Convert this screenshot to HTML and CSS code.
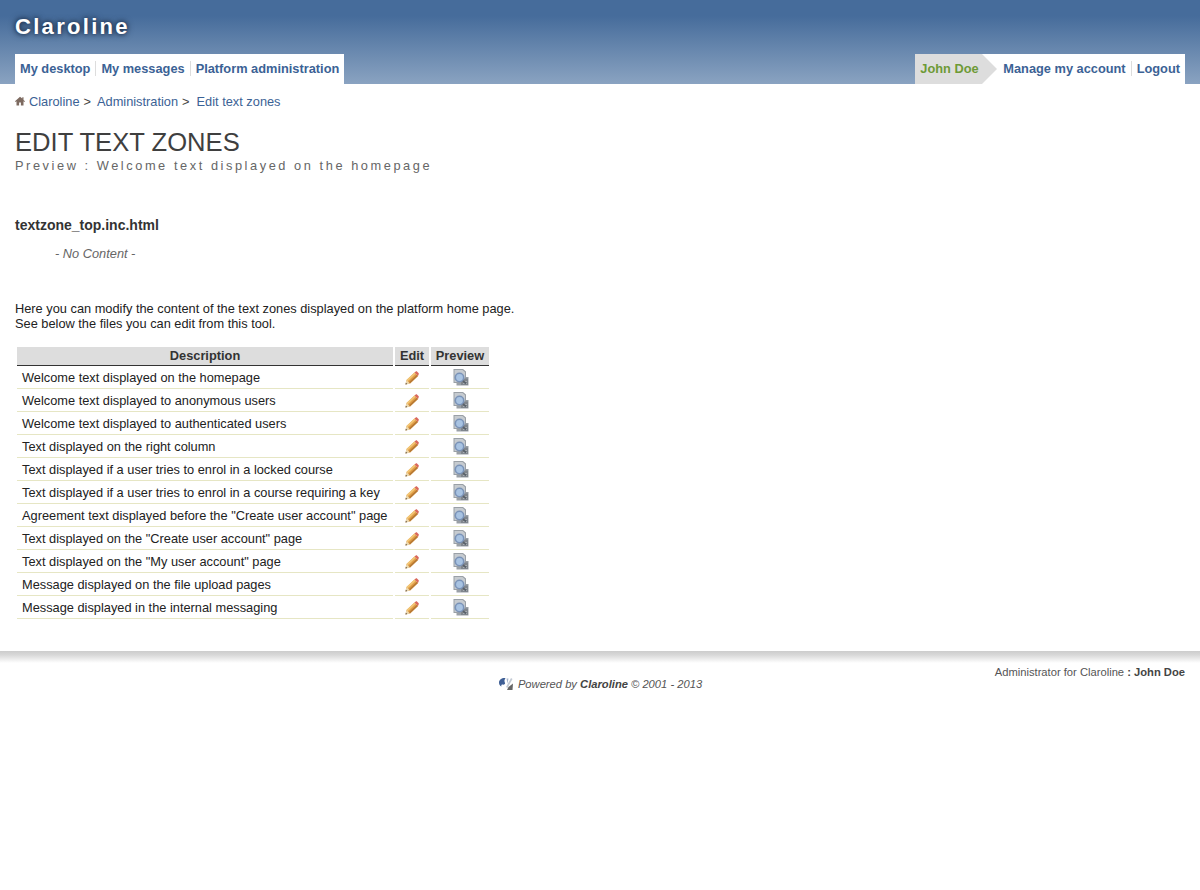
FILE: index.html
```html
<!DOCTYPE html>
<html lang="en">
<head>
<meta charset="utf-8">
<title>Claroline</title>
<link rel="stylesheet" href="styles.css">
</head>
<body>
<header class="top">
  <div class="brand">Claroline</div>
  <nav class="tabs">
    <ul class="tabset">
      <li><a href="#">My desktop</a></li>
      <li><a href="#">My messages</a></li>
      <li><a href="#">Platform administration</a></li>
    </ul>
    <div class="tabset user">
      <span class="username">John Doe</span>
      <ul class="tabset">
        <li><a href="#">Manage my account</a></li>
        <li><a href="#">Logout</a></li>
      </ul>
    </div>
  </nav>
</header>
<main class="content">
  <div class="crumbs">
    <svg class="home" width="10" height="10" viewBox="0 0 10 10"><path d="M5 .8 0 5.300l.6.7L1.500 5.300V9.500h2.600V6.500h1.800v3h2.600V5.300l.9.700.6-.7-1.500-1.400V1.200H7.300v1.300z" fill="#7d6a60"/></svg>
    <a href="#">Claroline</a><span class="sep">&gt;</span><a href="#">Administration</a><span class="sep wide">&gt;</span><a href="#">Edit text zones</a>
  </div>
  <h1>Edit text zones</h1>
  <p class="subtitle">Preview : Welcome text displayed on the homepage</p>
  <h2>textzone_top.inc.html</h2>
  <p class="empty">- No Content -</p>
  <p class="intro">Here you can modify the content of the text zones displayed on the platform home page.<br>See below the files you can edit from this tool.</p>
  <table class="zones">
    <thead><tr><th>Description</th><th>Edit</th><th>Preview</th></tr></thead>
    <tbody>
      <tr><td>Welcome text displayed on the homepage</td><td class="ic"><svg class="pen" viewBox="0 0 14 14"><use href="#pencil"/></svg></td><td class="ic"><svg class="prev" viewBox="0 0 17 17"><use href="#preview"/></svg></td></tr>
      <tr><td>Welcome text displayed to anonymous users</td><td class="ic"><svg class="pen" viewBox="0 0 14 14"><use href="#pencil"/></svg></td><td class="ic"><svg class="prev" viewBox="0 0 17 17"><use href="#preview"/></svg></td></tr>
      <tr><td>Welcome text displayed to authenticated users</td><td class="ic"><svg class="pen" viewBox="0 0 14 14"><use href="#pencil"/></svg></td><td class="ic"><svg class="prev" viewBox="0 0 17 17"><use href="#preview"/></svg></td></tr>
      <tr><td>Text displayed on the right column</td><td class="ic"><svg class="pen" viewBox="0 0 14 14"><use href="#pencil"/></svg></td><td class="ic"><svg class="prev" viewBox="0 0 17 17"><use href="#preview"/></svg></td></tr>
      <tr><td>Text displayed if a user tries to enrol in a locked course</td><td class="ic"><svg class="pen" viewBox="0 0 14 14"><use href="#pencil"/></svg></td><td class="ic"><svg class="prev" viewBox="0 0 17 17"><use href="#preview"/></svg></td></tr>
      <tr><td>Text displayed if a user tries to enrol in a course requiring a key</td><td class="ic"><svg class="pen" viewBox="0 0 14 14"><use href="#pencil"/></svg></td><td class="ic"><svg class="prev" viewBox="0 0 17 17"><use href="#preview"/></svg></td></tr>
      <tr><td>Agreement text displayed before the "Create user account" page</td><td class="ic"><svg class="pen" viewBox="0 0 14 14"><use href="#pencil"/></svg></td><td class="ic"><svg class="prev" viewBox="0 0 17 17"><use href="#preview"/></svg></td></tr>
      <tr><td>Text displayed on the "Create user account" page</td><td class="ic"><svg class="pen" viewBox="0 0 14 14"><use href="#pencil"/></svg></td><td class="ic"><svg class="prev" viewBox="0 0 17 17"><use href="#preview"/></svg></td></tr>
      <tr><td>Text displayed on the "My user account" page</td><td class="ic"><svg class="pen" viewBox="0 0 14 14"><use href="#pencil"/></svg></td><td class="ic"><svg class="prev" viewBox="0 0 17 17"><use href="#preview"/></svg></td></tr>
      <tr><td>Message displayed on the file upload pages</td><td class="ic"><svg class="pen" viewBox="0 0 14 14"><use href="#pencil"/></svg></td><td class="ic"><svg class="prev" viewBox="0 0 17 17"><use href="#preview"/></svg></td></tr>
      <tr><td>Message displayed in the internal messaging</td><td class="ic"><svg class="pen" viewBox="0 0 14 14"><use href="#pencil"/></svg></td><td class="ic"><svg class="prev" viewBox="0 0 17 17"><use href="#preview"/></svg></td></tr>
    </tbody>
  </table>
</main>
<footer class="foot">
  <div class="admin">Administrator for Claroline <b>: John Doe</b></div>
  <div class="powered">
    <svg width="16" height="14" viewBox="0 0 16 14"><path d="M1 5.500C1 2.500 4 .6 7.500 1 6.500 2.500 6 4 7 6 7.500 7 6 8 4.500 7.500 3.500 7.200 3 8 3.500 9.500 2 9 1 7.500 1 5.500z" fill="#3f5f95"/><path d="M8.500 1.500l2 0-1 5z" fill="#a5b4cc"/><path d="M13 1l1.500 1-5 9-1.500-1z" fill="#c3cad4"/><path d="M10.500 10l4.500-3.500-.5 6.500H9z" fill="#666"/></svg>
    <span>Powered by <b>Claroline</b> © 2001 - 2013</span>
  </div>
</footer>
<svg class="defs" width="0" height="0" aria-hidden="true">
  <defs>
    <symbol id="pencil" viewBox="0 0 14 14">
      <path d="M.5 13.500 1.500 9 9.500 1.500l3.500 3.500-8 7.500z" fill="#e3a048"/>
      <path d="M1.500 9 9.500 1.500l1.200 1.200-8 7.600z" fill="#f2c778"/>
      <path d="M5 12.500 13 5l-1.200-1.200-8 7.500z" fill="#b87a35"/>
      <path d="M9.500 1.500 10.500.7c.6-.5 1.200-.5 1.700 0l1.300 1.300c.5.500.5 1.100 0 1.700L13 5z" fill="#d9685c"/>
      <path d="M.5 13.500 1.500 9 5 12.500z" fill="#ecd8ae"/>
      <path d="M.5 13.500l.4-1.800 1.400 1.400z" fill="#5a5048"/>
    </symbol>
    <symbol id="preview" viewBox="0 0 17 17">
      <path d="M1.500 0H11l3 2.500V8H16.500v8.500H4.500V14H1.500z" fill="#9aa0a6"/>
      <path d="M2.500 1H10.500L13 3.200V13H2.500z" fill="#c6cbd0"/>
      <rect x="9" y="9.500" width="7" height="6.500" fill="#80868d"/>
      <rect x="11" y="12" width="4" height="1" fill="#a9aeb3"/>
      <rect x="11" y="14" width="4" height="1" fill="#a9aeb3"/>
      <circle cx="7.500" cy="8.500" r="5" fill="#7a93b8"/>
      <circle cx="7.500" cy="8.500" r="3.400" fill="#a8c3e2"/>
      <path d="M11 12l3 2.500" stroke="#5a626b" stroke-width="1.800"/>
    </symbol>
  </defs>
</svg>
</body>
</html>
```
FILE: styles.css
```css
html, body { margin: 0; padding: 0; background: #fff; }
body { font-family: "Liberation Sans", Arial, sans-serif; font-size: 12.800px; color: #333; min-height: 890px; }
a { color: #3b6295; text-decoration: none; }
ul { list-style: none; margin: 0; padding: 0; }

.top { height: 84px; padding: 0 15px; box-sizing: border-box; display: flex; flex-direction: column; justify-content: space-between; background: linear-gradient(#466c9b 0, #466c9b 16px, #8aa3c1 84px); }
.brand { padding-top: 15px; color: #fff; font-size: 22px; line-height: 23px; font-weight: bold; letter-spacing: 2.300px; text-shadow: 0 0 7px #1c2f4a, 0 0 4px #1c2f4a; }
.tabs { display: flex; justify-content: space-between; height: 30px; }
.tabset { display: flex; background: #fff; align-items: stretch; }
.tabset li { display: flex; align-items: center; padding: 0 5px; position: relative; }
.tabset li + li { padding-left: 6px; }
.tabset li + li::before { content: ""; position: absolute; left: 0; top: 7px; height: 15px; width: 1px; background: #ddd; }
.tabset li a { font-weight: bold; line-height: 30px; }
.user { align-items: center; }
.username { position: relative; display: block; width: 67px; padding-left: 5px; margin-right: 16px; box-sizing: border-box; height: 30px; line-height: 30px; background: #dddddd; color: #6e9a36; font-weight: bold; white-space: nowrap; }
.username::after { content: ""; position: absolute; left: 67px; top: 0; border-left: 15px solid #dddddd; border-top: 15px solid transparent; border-bottom: 15px solid transparent; }

.content { padding: 0 15px; }
.crumbs { display: flex; align-items: center; height: 15px; margin-top: 10px; line-height: 15px; }
.home { margin: 0 4px 2px 0; }
.sep { margin: 0 6px 0 4px; color: #444; }
.sep.wide { margin-right: 7px; }
h1 { margin: 18px 0 0; font-size: 25.600px; line-height: 30px; font-weight: normal; text-transform: uppercase; color: #3f3f3f; }
.subtitle { margin: 1px 0 0; line-height: 16px; letter-spacing: 0.2em; color: #666; }
h2 { margin: 43px 0 0; font-size: 14px; line-height: 17px; font-weight: bold; color: #333; }
.empty { margin: 12px 0 0 40px; font-style: italic; color: #666; line-height: 15px; }
.intro { margin: 40px 0 0; line-height: 15px; color: #222; }

.zones { margin-top: 14px; border-collapse: separate; border-spacing: 2px; color: #222; }
.zones th { background: #dddddd; border-bottom: 1px solid #333; height: 18px; padding: 0; line-height: 18px; color: #333; }
.zones th:first-child { width: 376px; }
.zones th:nth-child(2) { width: 34px; }
.zones th:nth-child(3) { width: 58px; }
.zones td { height: 19px; padding: 0 0 1px 5px; border-bottom: 1px solid #e6e6c4; line-height: 15px; white-space: nowrap; }
.zones td.ic { padding-left: 0; }
.ic svg { display: block; margin: 0 auto; }
.pen { width: 14px; height: 14px; }
.prev { width: 17px; height: 17px; }

.foot { margin-top: 30px; padding: 15px 15px 0; background: linear-gradient(#cccccc 0, #d8d8d8 4px, #fff 12px) no-repeat; font-size: 11.200px; line-height: 13px; color: #555; }
.admin { text-align: right; }
.admin b { color: #444; }
.powered { display: flex; justify-content: center; align-items: center; gap: 4px; margin-top: -2px; font-style: italic; }
.powered b { color: #444; }
.defs { position: absolute; }
```
